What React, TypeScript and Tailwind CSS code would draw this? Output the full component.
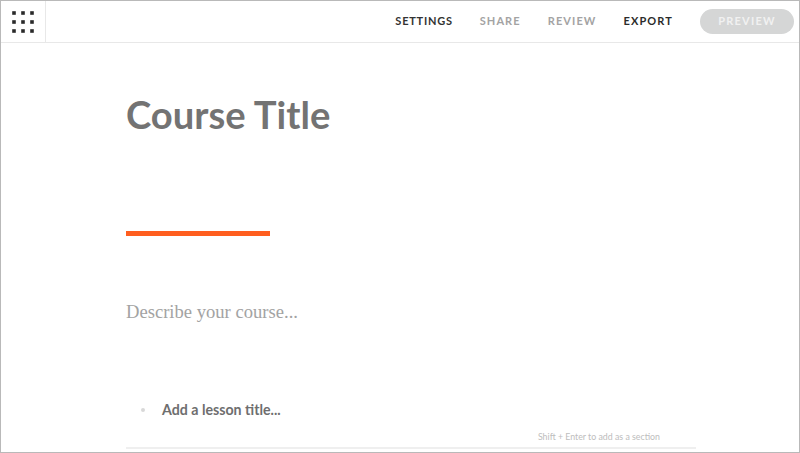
export default function App() {
  const nav = [
    { t: "SETTINGS", c: "text-[#333333] tracking-[0.75px]" },
    { t: "SHARE", c: "text-[#a3a3a3]" },
    { t: "REVIEW", c: "text-[#a3a3a3]" },
    { t: "EXPORT", c: "text-[#2b2b2b]" },
  ];
  const pts = [0, 9, 18];
  return (
    <div className="h-[453px] w-[800px] overflow-hidden border border-[#b9b9b9] bg-white font-['Lato',sans-serif]">
      <header className="flex h-[42px] items-center border-b border-[#e8e8e8]">
        <div className="flex h-full w-[45px] items-center justify-center border-r border-[#e8e8e8]">
          <svg width="22" height="22" viewBox="0 0 22 22" className="block">
            {pts.map((y) =>
              pts.map((x) => (
                <rect key={`${x}-${y}`} x={x + 0.2} y={y + 0.2} width="3.6" height="3.6" fill="#2a2a2a" />
              ))
            )}
          </svg>
        </div>
        <nav className="ml-auto flex items-center gap-[27px] text-[11px] font-bold tracking-[1.1px]">
          {nav.map((n) => (
            <span key={n.t} className={n.c}>{n.t}</span>
          ))}
        </nav>
        <button className="ml-[27px] mr-[5px] flex h-[25px] w-[94px] items-center justify-center rounded-full bg-[#d5d6d6] text-[11px] font-bold tracking-[1.2px] text-[#f1f1f1]">
          PREVIEW
        </button>
      </header>
      <main className="ml-[125px] w-[570px]">
        <h1 className="mt-[48px] text-[38.2px] leading-[46px] font-bold text-[#737373]">Course Title</h1>
        <div className="mt-[94px] h-[5px] w-[144px] bg-[#ff5e1f]" />
        <p className="mt-[63px] font-['Liberation_Serif',serif] text-[18.6px] leading-[26px] text-[#a3a3a3]">Describe your course...</p>
        <div className="mt-[75px] flex items-center pl-[15px]">
          <span className="h-[4px] w-[4px] rounded-full bg-[#d8d8d8]" />
          <span className="ml-[17px] text-[14.2px] leading-[20px] font-bold text-[#6e6e6e]">Add a lesson title...</span>
        </div>
        <div className="mt-[11px] flex justify-end pr-[36px] text-[8.8px] leading-[12px] text-[#bdbdbd]">Shift + Enter to add as a section</div>
        <div className="mt-[4px] h-[2px] bg-[#efefef]" />
      </main>
    </div>
  );
}
